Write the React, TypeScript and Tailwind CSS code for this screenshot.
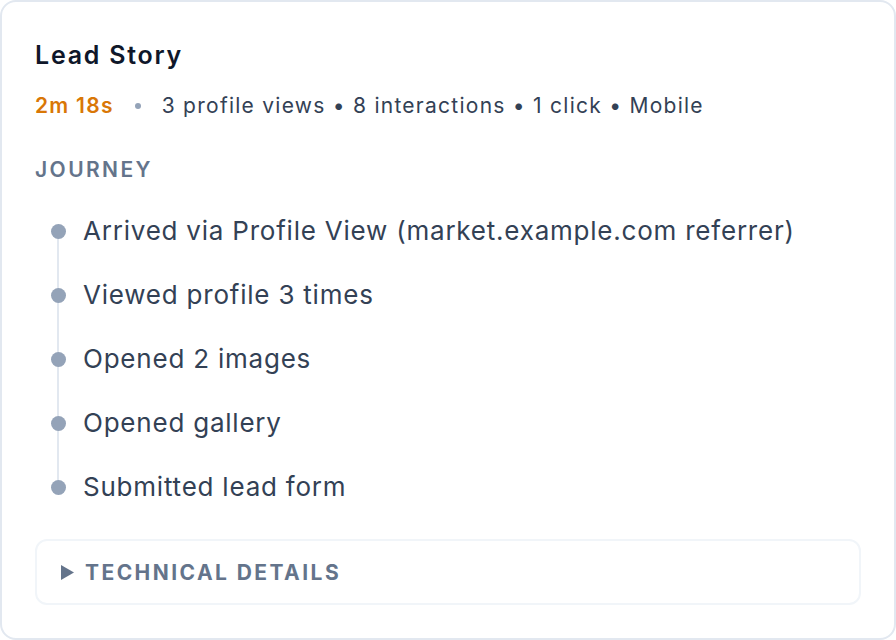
const steps = [
  "Arrived via Profile View (market.example.com referrer)",
  "Viewed profile 3 times",
  "Opened 2 images",
  "Opened gallery",
  "Submitted lead form",
];

export default function App() {
  return (
    <div className="w-[896px] h-[640px] bg-white font-['Inter',sans-serif]">
      <div className="h-full border-2 border-[#e2e8f0] rounded-[16px] bg-white px-[33px] pt-[35px] pb-[32px] flex flex-col">
        <h2 className="text-[25px] leading-[36px] font-semibold tracking-[0.07em] text-[#0f172a]">Lead Story</h2>

        <div className="mt-[18px] flex items-center text-[21px] leading-[30px] tracking-[0.06em]">
          <span className="font-semibold text-[#d97706]">2m 18s</span>
          <span className="mx-[21px] w-[6px] h-[6px] rounded-full bg-[#94a3b8]" />
          <span className="text-[#334155]">3 profile views • 8 interactions • 1 click • Mobile</span>
        </div>

        <div className="mt-[35px] text-[21px] leading-[28px] font-semibold tracking-[0.115em] text-[#64748b]">
          JOURNEY
        </div>

        <ul className="relative mt-[27px] flex flex-col gap-[24px]">
          {/* vertical connector */}
          <div className="absolute left-[22px] top-[20px] bottom-[20px] w-[2px] bg-[#e2e8f0]" />
          {steps.map((s) => (
            <li key={s} className="relative flex items-center h-[40px]">
              <span className="ml-[16px] w-[15px] h-[15px] rounded-full bg-[#94a3b8] shrink-0" />
              <span className="ml-[17px] text-[26px] leading-[40px] tracking-[0.03em] text-[#334155]">{s}</span>
            </li>
          ))}
        </ul>

        <div className="mt-[32px] h-[66px] border-2 border-[#f1f5f9] rounded-[12px] flex items-center pl-[24px]">
          <svg width="13" height="15" viewBox="0 0 13 15" className="shrink-0">
            <path d="M0 0 L13 7.5 L0 15 Z" fill="#64748b" />
          </svg>
          <span className="ml-[11px] mt-[1px] text-[21px] font-bold tracking-[0.116em] text-[#64748b]">
            TECHNICAL DETAILS
          </span>
        </div>
      </div>
    </div>
  );
}
